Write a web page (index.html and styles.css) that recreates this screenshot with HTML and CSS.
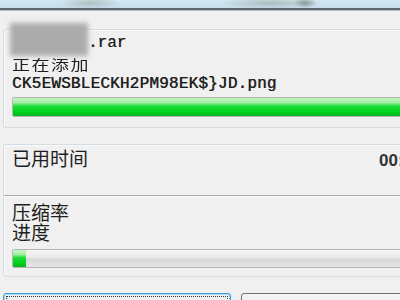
FILE: index.html
```html
<!DOCTYPE html>
<html>
<head>
<meta charset="utf-8">
<link rel="stylesheet" href="styles.css">
</head>
<body>
<div class="titlebar"></div>
<div class="content">
  <section class="group g1">
    <div class="name-row">
      <div class="blurred"></div>
      <span class="mono ext">.rar</span>
    </div>
    <div class="adding"><span class="squish">正在添加</span></div>
    <div class="mono file">CK5EWSBLECKH2PM98EK$}JD.png</div>
    <div class="bar bar-top"><div class="fill" style="width:100%"></div></div>
  </section>
  <section class="group g2">
    <div class="time-row">
      <span class="label">已用时间</span>
      <span class="value">00:00:01</span>
    </div>
    <div class="sep"></div>
    <div class="label lines">压缩率</div>
    <div class="label lines">进度</div>
    <div class="bar bar-bottom"><div class="fill" style="width:13px"></div></div>
  </section>
  <div class="buttons">
    <div class="btn btn-focus"><span class="focus-rect">后台(B)</span></div>
    <div class="btn">暂停(P)</div>
  </div>
</div>
</body>
</html>
```
FILE: styles.css
```css
html, body {
  margin: 0;
  padding: 0;
}
body {
  width: 400px;
  height: 300px;
  overflow: hidden;
  background: #f0f0f0;
  color: #222;
  font-family: "Noto Sans CJK SC", "Noto Sans", sans-serif;
}
.titlebar {
  height: 8px;
  background:
    radial-gradient(ellipse 30px 6px at 90px 3px, rgba(150,160,150,0.55), rgba(150,160,150,0) 100%),
    radial-gradient(ellipse 50px 6px at 270px 3px, rgba(140,150,140,0.5), rgba(140,150,140,0) 100%),
    radial-gradient(ellipse 12px 5px at 305px 3px, rgba(90,100,100,0.6), rgba(90,100,100,0) 100%),
    linear-gradient(#d4e8f3, #c6dcea);
  border-bottom: 2px solid #5e666e;
  box-shadow: 0 1px 0 #b8bec4;
}
.content {
  padding: 19px 0 0 3px;
}
.group {
  box-sizing: border-box;
  width: 430px;
  border: 1px solid #d3dce2;
  border-radius: 3px;
  box-shadow: inset 1px 1px 0 #fafafa;
}
.g1 {
  height: 99px;
  padding-left: 8px;
}
.name-row {
  display: flex;
  align-items: flex-start;
  height: 26px;
}
.blurred {
  width: 78px;
  height: 33px;
  margin: -7px 0 0 -2px;
  background: #ababab;
  filter: blur(2.5px);
}
.mono {
  font-family: "Liberation Mono", "DejaVu Sans Mono", monospace;
  font-size: 16px;
  color: #1e1e1e;
}
.ext {
  line-height: 16px;
  margin-top: 5px;
  text-shadow: 0.4px 0 0 #555;
}
.adding {
  height: 15px;
  line-height: 15px;
  font-size: 18px;
  letter-spacing: 1.5px;
  margin-top: 1px;
  white-space: nowrap;
}
.squish {
  display: inline-block;
  transform: scaleY(0.74);
  transform-origin: center center;
  color: #1e1e1e;
}
.file {
  line-height: 18px;
  margin-top: 3px;
  text-shadow: 0.5px 0 0 #444;
  letter-spacing: 0.2px;
}
.bar {
  box-sizing: border-box;
  border: 1px solid #b4b4b4;
  border-radius: 2px;
  background: linear-gradient(#f6f6f6 0%, #e9e9e9 45%, #d8d8d8 55%, #e6e6e6 100%);
  overflow: hidden;
}
.bar .fill {
  height: 100%;
  background: linear-gradient(#c2f6c2 0%, #a6eea6 25%, #1fdc3a 45%, #00d21a 75%, #06b622 100%);
}
.bar-top {
  height: 20px;
  margin-top: 4px;
}
.bar-bottom {
  height: 19px;
  margin: 7px 0 0 8px;
}
.g2 {
  height: 133px;
  margin-top: 16px;
  padding-top: 2px;
}
.time-row {
  display: grid;
  grid-template-columns: 367px auto;
  align-items: baseline;
  padding-left: 8px;
  height: 48px;
}
.label {
  font-size: 19px;
  line-height: 22px;
  color: #1e1e1e;
}
.value {
  font-family: "Liberation Sans", Arial, sans-serif;
  font-weight: bold;
  font-size: 17px;
  color: #333;
}
.sep {
  height: 1px;
  background: #a8a8a8;
  border-bottom: 1px solid #fcfcfc;
  margin-bottom: 5px;
}
.lines {
  padding-left: 8px;
  line-height: 20px;
}
.buttons {
  display: flex;
  gap: 10px;
  margin-top: 16px;
}
.btn {
  box-sizing: border-box;
  height: 24px;
  width: 228px;
  border: 1px solid #707070;
  border-radius: 3px;
  background: linear-gradient(#f4f4f4, #e6e6e6);
  font-size: 15px;
  text-align: center;
  line-height: 26px;
  color: #222;
  flex: none;
}
.btn + .btn {
  width: 180px;
  padding-left: 60px;
}
.btn-focus {
  border-color: #3c9ad6;
  box-shadow: inset 0 0 0 1px #a6dcf6;
  padding: 2px;
}
.focus-rect {
  display: block;
  height: 18px;
  border-top: 1px dotted #333;
  border-left: 1px dotted #333;
  border-right: 1px dotted #333;
  line-height: 22px;
}
```
